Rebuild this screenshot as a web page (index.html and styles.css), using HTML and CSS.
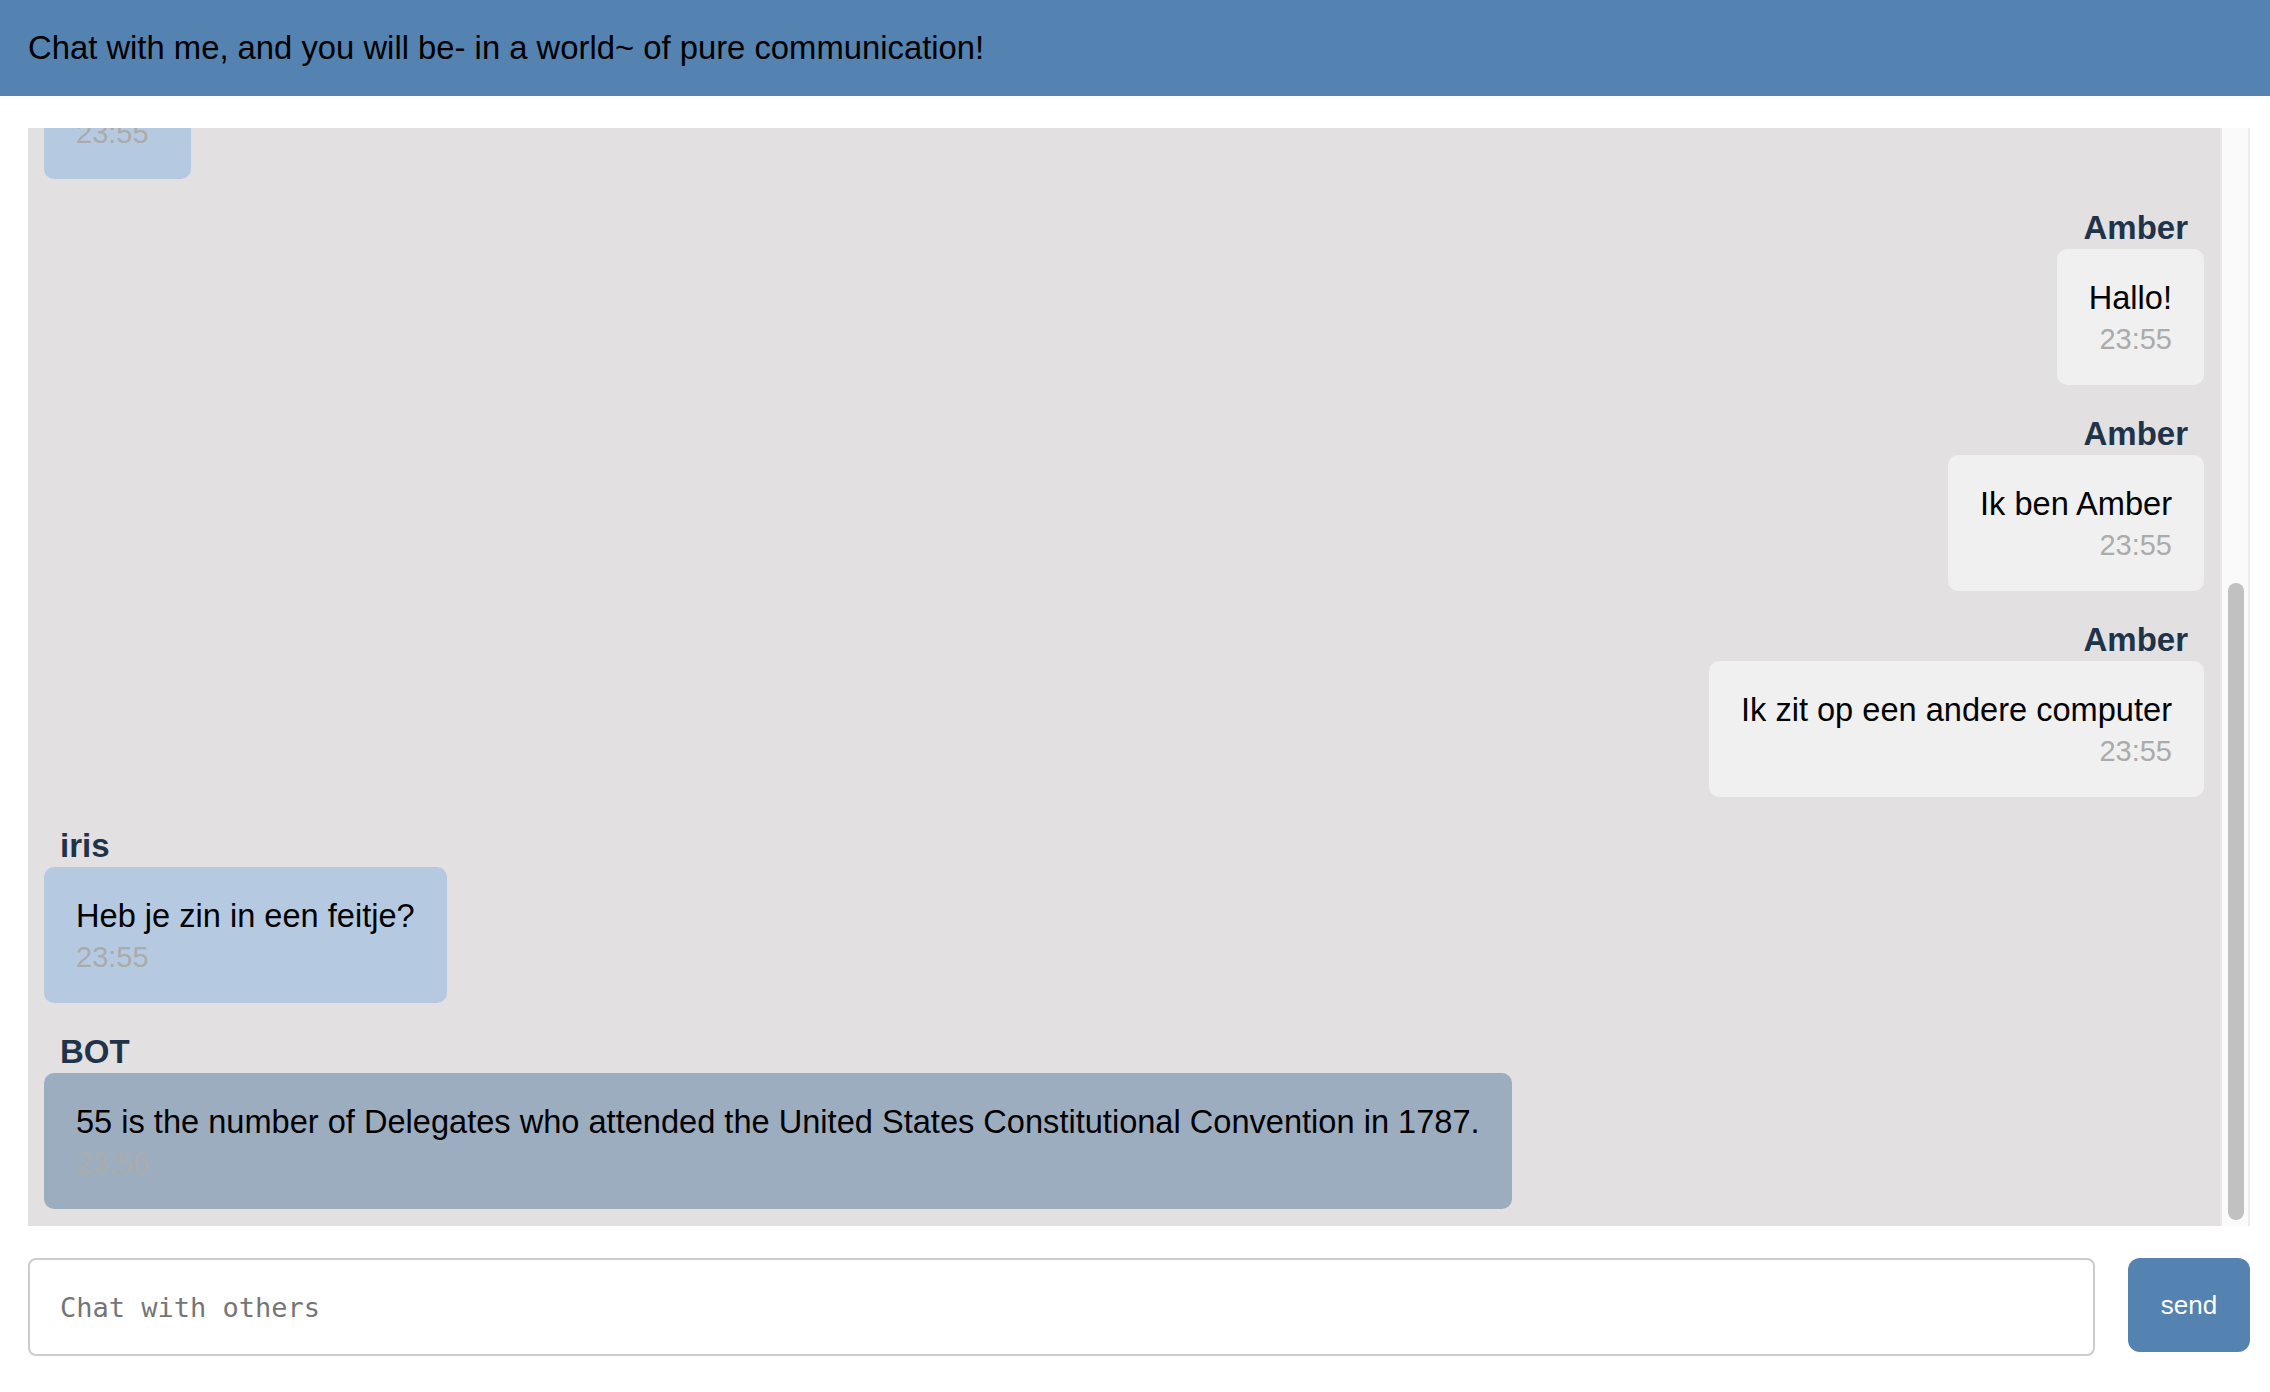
FILE: index.html
```html
<!DOCTYPE html>
<html lang="nl">
<head>
<meta charset="utf-8">
<title>Chat</title>
<link rel="stylesheet" href="styles.css">
</head>
<body>
<header class="topbar">Chat with me, and you will be- in a world~ of pure communication!</header>
<main class="page">
  <section class="chat">
    <div class="messages">
      <div class="msg msg--left">
        <div class="msg__name">iris</div>
        <div class="msg__bubble msg__bubble--iris">
          <div class="msg__text">Hallo!</div>
          <div class="msg__time">23:55</div>
        </div>
      </div>
      <div class="msg msg--right">
        <div class="msg__name">Amber</div>
        <div class="msg__bubble msg__bubble--self">
          <div class="msg__text">Hallo!</div>
          <div class="msg__time">23:55</div>
        </div>
      </div>
      <div class="msg msg--right">
        <div class="msg__name">Amber</div>
        <div class="msg__bubble msg__bubble--self">
          <div class="msg__text">Ik ben Amber</div>
          <div class="msg__time">23:55</div>
        </div>
      </div>
      <div class="msg msg--right">
        <div class="msg__name">Amber</div>
        <div class="msg__bubble msg__bubble--self">
          <div class="msg__text">Ik zit op een andere computer</div>
          <div class="msg__time">23:55</div>
        </div>
      </div>
      <div class="msg msg--left">
        <div class="msg__name">iris</div>
        <div class="msg__bubble msg__bubble--iris">
          <div class="msg__text">Heb je zin in een feitje?</div>
          <div class="msg__time">23:55</div>
        </div>
      </div>
      <div class="msg msg--left">
        <div class="msg__name">BOT</div>
        <div class="msg__bubble msg__bubble--bot">
          <div class="msg__text">55 is the number of Delegates who attended the United States Constitutional Convention in 1787.</div>
          <div class="msg__time">23:56</div>
        </div>
      </div>
    </div>
    <div class="scrollbar"><div class="scrollbar__thumb"></div></div>
  </section>
  <form class="composer">
    <input class="composer__input" type="text" placeholder="Chat with others">
    <button class="composer__send" type="button">send</button>
  </form>
</main>
</body>
</html>
```

FILE: styles.css
```css
html, body {
  margin: 0;
  padding: 0;
  height: 100%;
}

body {
  display: flex;
  flex-direction: column;
  background: #ffffff;
  font-family: "Liberation Sans", Arial, Helvetica, sans-serif;
  color: #000;
  overflow: hidden;
}

.topbar {
  flex: 0 0 96px;
  height: 96px;
  line-height: 96px;
  padding: 0 28px;
  background: #5482b1;
  font-size: 32.8px;
  color: #000;
  white-space: nowrap;
}

.page {
  flex: 1 1 auto;
  min-height: 0;
  display: flex;
  flex-direction: column;
  gap: 32px;
  padding: 32px 20px 36px 28px;
}

.chat {
  flex: 1 1 auto;
  min-height: 0;
  display: flex;
}

.messages {
  flex: 1 1 auto;
  min-width: 0;
  display: flex;
  flex-direction: column;
  justify-content: flex-end;
  gap: 31px;
  padding: 0 16px 17px 16px;
  background: #e2e0e1;
  overflow: hidden;
}

.msg {
  flex: 0 0 auto;
  display: flex;
  flex-direction: column;
}

.msg--left {
  align-items: flex-start;
}

.msg--right {
  align-items: flex-end;
}

.msg__name {
  padding: 0 16px;
  margin-bottom: 3px;
  font-size: 33px;
  line-height: 36px;
  font-weight: 700;
  color: #1f3349;
}

.msg__bubble {
  padding: 31px 32px 30px;
  border-radius: 10px;
}

.msg--right .msg__bubble {
  text-align: right;
}

.msg__bubble--self {
  background: #f0f0f0;
}

.msg__bubble--iris {
  background: #b5cae0;
}

.msg__bubble--bot {
  background: #9cadbf;
}

.msg__text {
  font-size: 32.6px;
  line-height: 36px;
  white-space: nowrap;
}

.msg__time {
  margin-top: 7px;
  font-size: 29px;
  line-height: 32px;
  color: #ababab;
}

.scrollbar {
  flex: 0 0 26px;
  display: flex;
  flex-direction: column;
  justify-content: flex-end;
  background: #fafafa;
  border-left: 2px solid #e9e9e9;
  border-right: 2px solid #ededed;
}

.scrollbar__thumb {
  width: 16px;
  height: 637px;
  margin: 0 0 6px 6px;
  border-radius: 8px;
  background: #c1c1c1;
}

.composer {
  flex: 0 0 auto;
  display: flex;
  align-items: flex-start;
  gap: 33px;
  margin: 0;
}

.composer__input {
  flex: 1 1 auto;
  min-width: 0;
  box-sizing: border-box;
  height: 98px;
  margin: 0;
  padding: 0 30px;
  border: 2px solid #cccccc;
  border-radius: 8px;
  background: #ffffff;
  font-family: "DejaVu Sans Mono", "Liberation Mono", monospace;
  font-size: 27px;
  color: #000;
  outline: none;
}

.composer__input::placeholder {
  color: #757575;
}

.composer__send {
  flex: 0 0 122px;
  width: 122px;
  height: 94px;
  margin: 0;
  padding: 0;
  border: none;
  border-radius: 12px;
  background: #5482b1;
  font-family: "Liberation Sans", Arial, sans-serif;
  font-size: 26px;
  color: #ffffff;
  cursor: pointer;
}
```
